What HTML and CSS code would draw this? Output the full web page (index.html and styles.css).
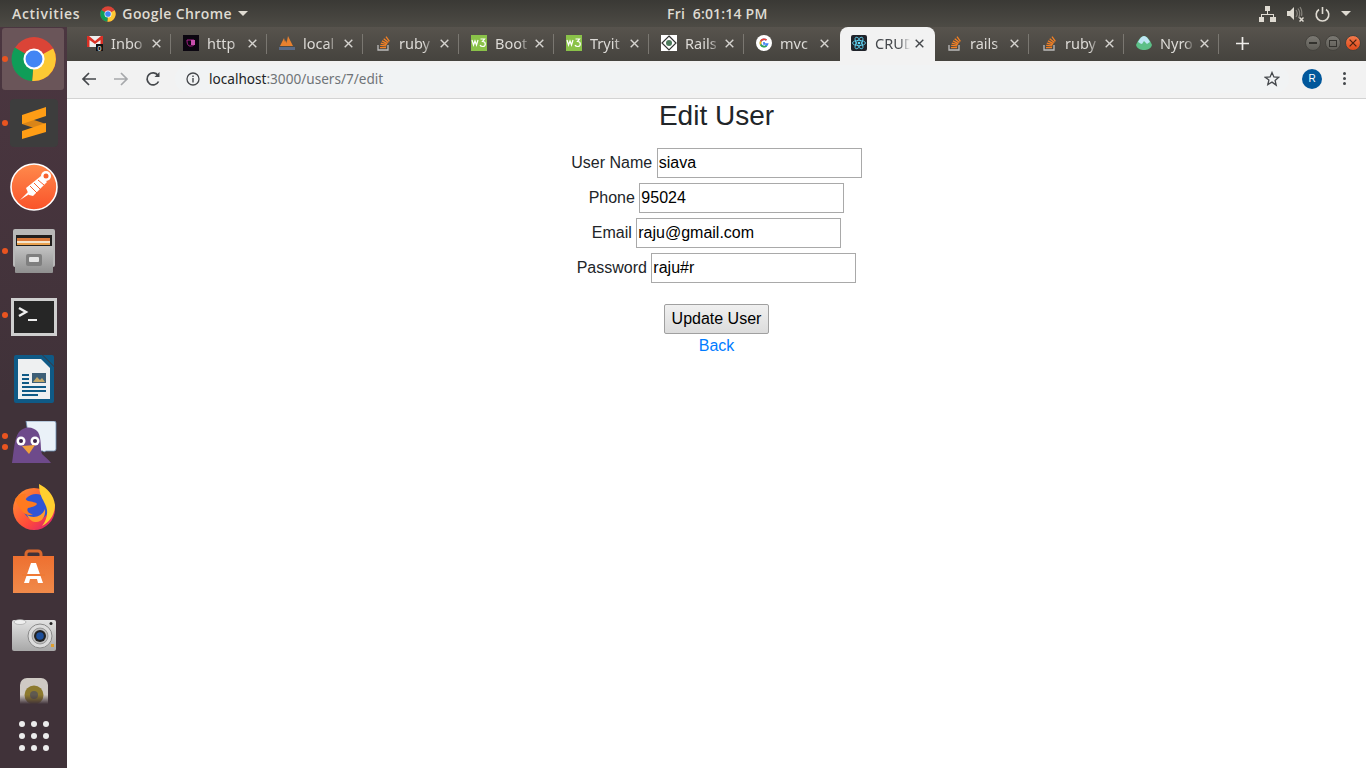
FILE: index.html
```html
<!DOCTYPE html>
<html lang="en">
<head>
    <meta charset="UTF-8">
    <title>Edit User</title>
    <link rel="stylesheet" href="styles.css">
</head>
<body>
    <svg class="defs" width="0" height="0">
        <symbol id="so" viewBox="0 0 16 16">
            <path d="M3 10v5h10v-5" fill="none" stroke="#bcbbbb" stroke-width="1.300"/>
            <path d="M5 12.600h6M5.200 10.400l6 .5M5.800 8.200l5.900 1.500M7 5.900l5.400 2.700M8.700 3.700l4.700 3.800M11 1.600l3.400 4.800" fill="none" stroke="#f48024" stroke-width="1.300"/>
        </symbol>
        <symbol id="w3" viewBox="0 0 16 16">
            <rect width="16" height="16" fill="#8ac249"/>
            <path d="M1 5l1.500 5 1.500-4 1.500 4 1.500-5M9.500 4h4l-2 2.500c2 0 2.800 1.200 2.800 2.500s-1 2.500-2.600 2.500-2.400-.8-2.700-1.500" fill="none" stroke="#fff" stroke-width="1.200"/>
        </symbol>
        <symbol id="close" viewBox="0 0 9 9">
            <path d="M.7.7l7.600 7.600M8.300.7L.7 8.300" fill="none" stroke="currentColor" stroke-width="1.400"/>
        </symbol>
    </svg>

    <header class="top-panel">
        <span class="panel-label activities">Activities</span>
        <span class="app-menu">
            <svg class="app-menu-icon" viewBox="0 0 48 48">
                <circle cx="24" cy="24" r="23" fill="#db4437"/>
                <path d="M24 24L44 13A23 23 0 0 1 22 47Z" fill="#fcc934"/>
                <path d="M24 24L22 47A23 23 0 0 1 4 12Z" fill="#0f9d58"/>
                <circle cx="24" cy="24" r="10.500" fill="#fff"/>
                <circle cx="24" cy="24" r="8.500" fill="#4285f4"/>
            </svg>
            <span class="panel-label app-name">Google Chrome</span>
            <i class="caret"></i>
        </span>
        <span class="panel-label clock">Fri&nbsp; 6:01:14 PM</span>
        <span class="status-icons">
            <svg width="17" height="16" viewBox="0 0 17 16" fill="#dfdbd2">
                <rect x="6" y="0" width="5" height="5"/>
                <rect x="0" y="11" width="5" height="5"/>
                <rect x="11" y="11" width="6" height="5"/>
                <path d="M8 5h1v3h6v3h-1V9H3v2H2V8h6z"/>
            </svg>
            <svg width="17" height="16" viewBox="0 0 17 16">
                <path d="M0 5h3l4-4v13l-4-4H0z" fill="#dfdbd2"/>
                <path d="M9 4c1.500 2 1.500 5 0 7M11 2.500c2 3 2 7 .5 9.500M13 1c2 3 2.200 6 1.500 9" fill="none" stroke="#86837c" stroke-width="1.200"/>
                <path d="M12.500 11.500l4 4M16.500 11.500l-4 4" stroke="#dfdbd2" stroke-width="1.500"/>
            </svg>
            <svg width="15" height="16" viewBox="0 0 15 16" fill="none" stroke="#dfdbd2" stroke-width="1.600">
                <path d="M4 3.500a6.300 6.300 0 1 0 7 0M7.500 1v7"/>
            </svg>
            <i class="caret"></i>
        </span>
    </header>

    <div class="desktop">
        <nav class="dock">
            <div class="dock-list">
                <div class="dock-item active">
                    <i class="dot"></i>
                    <svg width="46" height="46" viewBox="0 0 48 48">
                        <circle cx="24" cy="24" r="23" fill="#db4437"/>
                        <path d="M24 24L44 13A23 23 0 0 1 22 47Z" fill="#fcc934"/>
                        <path d="M24 24L22 47A23 23 0 0 1 4 12Z" fill="#0f9d58"/>
                        <circle cx="24" cy="24" r="11" fill="#fff"/>
                        <circle cx="24" cy="24" r="8.800" fill="#4285f4"/>
                    </svg>
                </div>
                <div class="dock-item">
                    <i class="dot"></i>
                    <svg width="48" height="48" viewBox="0 0 48 48">
                        <rect width="48" height="48" rx="4" fill="#3d3d3d"/>
                        <path d="M12 17l24 8v8L12 25z" fill="#d98518"/>
                        <path d="M12 16L36 8v9L12 25z" fill="#ff9d15"/>
                        <path d="M12 32l24-8v9l-24 7z" fill="#ff9d15"/>
                    </svg>
                </div>
                <div class="dock-item">
                    <svg width="48" height="48" viewBox="0 0 48 48">
                        <defs><linearGradient id="pm" x1="0" y1="0" x2="0" y2="1"><stop offset="0" stop-color="#ff8a4c"/><stop offset="1" stop-color="#f9532a"/></linearGradient></defs>
                        <circle cx="24" cy="24" r="23" fill="url(#pm)" stroke="#fff" stroke-width="1.600"/>
                        <path d="M10 37l9-9 2 2z" fill="#fff"/>
                        <path d="M16 25l15-12 6 6-14 14-4-1z" fill="#fff"/>
                        <path d="M20 23l8 8M24 20l7 7M28 17l6 5" stroke="#f9632f" stroke-width="1" fill="none"/>
                        <circle cx="36" cy="13" r="5" fill="#fff"/>
                        <circle cx="36" cy="13" r="2.500" fill="#f9632f"/>
                    </svg>
                </div>
                <div class="dock-item">
                    <i class="dot"></i>
                    <svg width="42" height="44" viewBox="0 0 42 44">
                        <defs><linearGradient id="cab" x1="0" y1="0" x2="0" y2="1"><stop offset="0" stop-color="#c4c4c4"/><stop offset="1" stop-color="#8f8f8f"/></linearGradient></defs>
                        <rect x="0" y="0" width="42" height="38" rx="2" fill="#b8b8b8"/>
                        <rect x="3" y="6" width="36" height="15" fill="#211f1e"/>
                        <rect x="4" y="9" width="33" height="5" fill="#d9783a"/>
                        <rect x="4" y="12" width="33" height="2" fill="#f4e4cc"/>
                        <rect x="4" y="14" width="33" height="2" fill="#e9a14f"/>
                        <rect x="2" y="17" width="38" height="27" rx="1" fill="url(#cab)"/>
                        <rect x="13" y="25" width="16" height="12" rx="2" fill="#7f7f7f"/>
                        <rect x="16" y="28" width="10" height="5" rx="1" fill="#e6e6e6"/>
                    </svg>
                </div>
                <div class="dock-item terminal">
                    <i class="dot"></i>
                    <svg width="46" height="38" viewBox="0 0 46 38">
                        <rect width="46" height="38" fill="#cfcfcf"/>
                        <rect x="3" y="3" width="40" height="32" fill="#262626"/>
                        <path d="M8 10l7 4-7 4" fill="none" stroke="#eee" stroke-width="2.400"/>
                        <rect x="17" y="21" width="9" height="2" fill="#eee"/>
                    </svg>
                </div>
                <div class="dock-item">
                    <svg width="40" height="48" viewBox="0 0 40 48">
                        <path d="M2 0h26l12 12v34a2 2 0 0 1-2 2H2a2 2 0 0 1-2-2V2a2 2 0 0 1 2-2z" fill="#0f5a86"/>
                        <path d="M4 4h23l9 9v31H4z" fill="#eef0f1"/>
                        <path d="M29 0h9a2 2 0 0 1 2 2v9z" fill="#0f5a86"/>
                        <rect x="18" y="18" width="14" height="10" fill="#3d5f77"/>
                        <path d="M19 27l4-5 3 3 2-2 3 4z" fill="#c4a96a"/>
                        <path d="M8 19h7v2H8zM8 23h7v2H8zM8 27h7v2H8zM8 31h24v2H8zM8 35h24v2H8zM8 39h16v2H8z" fill="#0f5a86"/>
                    </svg>
                </div>
                <div class="dock-item">
                    <i class="dot dot-upper"></i>
                    <i class="dot dot-lower"></i>
                    <svg width="46" height="44" viewBox="0 0 46 44">
                        <path d="M15 0h28a2 2 0 0 1 2 2v26a2 2 0 0 1-2 2h-8l-2 1-1-1H20z" fill="#eaf1f8" stroke="#6d8fb3" stroke-width=".8"/>
                        <path d="M1 42C3 30 3 18 8 11c5-6 14-6 19 0 4 7 2 17 4 22 3 3 7 6 9 9z" fill="#6e4a8b"/>
                        <circle cx="10" cy="20" r="4.500" fill="#fff"/>
                        <circle cx="24" cy="20" r="4.500" fill="#fff"/>
                        <circle cx="10" cy="20" r="2" fill="#3a2348"/>
                        <circle cx="24" cy="20" r="2" fill="#3a2348"/>
                        <path d="M11 25l13-1-6 9z" fill="#f0a03c"/>
                    </svg>
                </div>
                <div class="dock-item">
                    <svg width="44" height="46" viewBox="0 0 44 46">
                        <defs><linearGradient id="ff" x1="0" y1="0" x2="1" y2="1"><stop offset="0" stop-color="#ff9a2e"/><stop offset=".6" stop-color="#ff4a3a"/><stop offset="1" stop-color="#d6197c"/></linearGradient></defs>
                        <circle cx="22" cy="25" r="21" fill="url(#ff)"/>
                        <circle cx="24" cy="23" r="13" fill="#2f55d4"/>
                        <path d="M27 0c8 4 15 11 16 21 0 9-5 17-13 21 5-6 7-15 3-22-2-5-6-9-6-20z" fill="#ffcf2f"/>
                        <path d="M3 15c4-5 8-6 11-5-2 3-1 6 2 7 4 1 8 1 9 3-2 3-6 3-9 4-2 3 1 6 5 6-3 2-8 1-11-3-3-4-5-7-7-12z" fill="#ff7a1f"/>
                        <path d="M15 31c6 4 15 2 18-6 1 8-4 14-10 13-3 0-6-3-8-7z" fill="#ff9a2e"/>
                    </svg>
                </div>
                <div class="dock-item">
                    <svg width="43" height="44" viewBox="0 0 43 44">
                        <defs><linearGradient id="bag" x1="0" y1="0" x2="0" y2="1"><stop offset="0" stop-color="#ee7030"/><stop offset="1" stop-color="#f08a4a"/></linearGradient></defs>
                        <path d="M14 10V5a3 3 0 0 1 3-3h9a3 3 0 0 1 3 3v5" fill="none" stroke="#d9682e" stroke-width="3"/>
                        <path d="M1 7h41v37H1z" fill="url(#bag)"/>
                        <path d="M19 14h5l7 20h-5l-1-4h-7l-1 4h-5z" fill="#fff"/>
                        <path d="M10 25h23v2H10z" fill="#ef7a35"/>
                    </svg>
                </div>
                <div class="dock-item">
                    <svg width="44" height="32" viewBox="0 0 44 32">
                        <defs><linearGradient id="cam" x1="0" y1="0" x2="0" y2="1"><stop offset="0" stop-color="#e2e2e2"/><stop offset="1" stop-color="#a8a8a8"/></linearGradient></defs>
                        <rect y="1" width="44" height="31" rx="2" fill="url(#cam)"/>
                        <ellipse cx="8" cy="3" rx="6" ry="2.500" fill="#efefef" stroke="#8a8a8a" stroke-width=".5"/>
                        <circle cx="28" cy="17" r="12" fill="#dcdcdc" stroke="#8a8a8a"/>
                        <circle cx="28" cy="17" r="8" fill="#bdbdbd" stroke="#777" stroke-width=".6"/>
                        <circle cx="28" cy="17" r="6" fill="#232323"/>
                        <circle cx="28" cy="17" r="3.800" fill="#1d4f9a"/>
                        <circle cx="39" cy="4.500" r="1.500" fill="#222"/>
                        <rect x="39" y="25" width="3" height="3" fill="#e0a030"/>
                    </svg>
                </div>
                <div class="dock-item speaker">
                    <svg width="36" height="42" viewBox="0 0 36 42">
                        <rect x="4" y="0" width="28" height="42" rx="7" fill="#cfcac4"/>
                        <circle cx="18" cy="17" r="9.500" fill="#8d7a2e"/>
                        <circle cx="18" cy="17" r="4" fill="#5f5a50"/>
                    </svg>
                </div>
            </div>
            <div class="app-grid">
                <i></i><i></i><i></i><i></i><i></i><i></i><i></i><i></i><i></i>
            </div>
        </nav>

        <div class="browser">
            <div class="tab-strip">
                <div class="tab">
                    <svg class="favicon" viewBox="0 0 16 16">
                        <rect y="1" width="16" height="11" fill="#eee"/>
                        <path d="M0 1h2l6 5 6-5h2v11h-2.500V5L8 9 2.500 5v7H0z" fill="#d93025"/>
                        <rect x="9" y="9" width="8" height="8" fill="#111"/>
                        <text x="10.500" y="15.500" class="badge-text">0</text>
                    </svg>
                    <span class="tab-title">Inbo</span>
                    <svg class="tab-close"><use href="#close"/></svg>
                </div>
                <div class="tab">
                    <svg class="favicon" viewBox="0 0 16 16">
                        <rect width="16" height="16" fill="#0b0610"/>
                        <path d="M4 5h7v4c0 2-2 2-4 2s-3-2-3-6z" fill="none" stroke="#b0238f" stroke-width="1"/>
                        <rect x="8" y="5" width="4" height="5" fill="#c84fae"/>
                    </svg>
                    <span class="tab-title">http</span>
                    <svg class="tab-close"><use href="#close"/></svg>
                </div>
                <div class="tab">
                    <svg class="favicon" viewBox="0 0 16 16">
                        <path d="M1 11L5 3l2 8zM7 11l2-10 5 10zM4 11L7 5l1 6z" fill="#e8812f"/>
                        <rect x="0" y="12" width="16" height="3" fill="#5a6a86"/>
                    </svg>
                    <span class="tab-title">local</span>
                    <svg class="tab-close"><use href="#close"/></svg>
                </div>
                <div class="tab">
                    <svg class="favicon"><use href="#so"/></svg>
                    <span class="tab-title">ruby</span>
                    <svg class="tab-close"><use href="#close"/></svg>
                </div>
                <div class="tab">
                    <svg class="favicon"><use href="#w3"/></svg>
                    <span class="tab-title">Boot</span>
                    <svg class="tab-close"><use href="#close"/></svg>
                </div>
                <div class="tab">
                    <svg class="favicon"><use href="#w3"/></svg>
                    <span class="tab-title">Tryit</span>
                    <svg class="tab-close"><use href="#close"/></svg>
                </div>
                <div class="tab">
                    <svg class="favicon" viewBox="0 0 16 16">
                        <rect width="16" height="16" fill="#fff"/>
                        <path d="M8 1l7 7-7 7-7-7z" fill="none" stroke="#333" stroke-width="1.200"/>
                        <circle cx="8" cy="8" r="3" fill="#4c7a5c"/>
                    </svg>
                    <span class="tab-title">Rails</span>
                    <svg class="tab-close"><use href="#close"/></svg>
                </div>
                <div class="tab no-sep">
                    <svg class="favicon" viewBox="0 0 16 16">
                        <circle cx="8" cy="8" r="8" fill="#fff"/>
                        <path d="M8 7v2h3.500a3.600 3.600 0 1 1-1-3.800" fill="none" stroke="#4285f4" stroke-width="1.700"/>
                        <path d="M10.500 5.200A3.700 3.700 0 0 0 4.700 6.400" fill="none" stroke="#ea4335" stroke-width="1.700"/>
                        <path d="M4.700 6.400a3.700 3.700 0 0 0 0 3.200" fill="none" stroke="#fbbc05" stroke-width="1.700"/>
                        <path d="M4.700 9.600a3.700 3.700 0 0 0 5.800 1.200" fill="none" stroke="#34a853" stroke-width="1.700"/>
                    </svg>
                    <span class="tab-title">mvc</span>
                    <svg class="tab-close"><use href="#close"/></svg>
                </div>
                <div class="tab active">
                    <svg class="favicon" viewBox="0 0 16 16">
                        <rect width="16" height="16" rx="2" fill="#20232a"/>
                        <g fill="none" stroke="#61dafb" stroke-width=".8">
                            <ellipse cx="8" cy="8" rx="6.500" ry="2.600"/>
                            <ellipse cx="8" cy="8" rx="6.500" ry="2.600" transform="rotate(60 8 8)"/>
                            <ellipse cx="8" cy="8" rx="6.500" ry="2.600" transform="rotate(120 8 8)"/>
                        </g>
                        <circle cx="8" cy="8" r="1.300" fill="#61dafb"/>
                    </svg>
                    <span class="tab-title">CRUD</span>
                    <svg class="tab-close"><use href="#close"/></svg>
                </div>
                <div class="tab">
                    <svg class="favicon"><use href="#so"/></svg>
                    <span class="tab-title">rails</span>
                    <svg class="tab-close"><use href="#close"/></svg>
                </div>
                <div class="tab">
                    <svg class="favicon"><use href="#so"/></svg>
                    <span class="tab-title">ruby</span>
                    <svg class="tab-close"><use href="#close"/></svg>
                </div>
                <div class="tab">
                    <svg class="favicon" viewBox="0 0 16 16">
                        <path d="M0 10C2 5 5 1 8 1s6 4 8 9c-1 4-5 5-8 5s-7-1-8-5z" fill="#5cbf87"/>
                        <path d="M2 7C4 3 6 1 8 1s4 2 6 6c-2 1-3 2-3 2L8 6 6 9C5 9 4 8 2 7z" fill="#bfe6f5"/>
                    </svg>
                    <span class="tab-title">Nyro</span>
                    <svg class="tab-close"><use href="#close"/></svg>
                </div>
                <span class="new-tab">
                    <svg width="13" height="13" viewBox="0 0 13 13"><path d="M6.500 0v13M0 6.500h13" stroke="#efedea" stroke-width="1.700"/></svg>
                </span>
                <div class="window-buttons">
                    <span class="win-btn"><i class="win-min"></i></span>
                    <span class="win-btn"><i class="win-max"></i></span>
                    <span class="win-btn win-close"><svg width="8" height="8"><use href="#close"/></svg></span>
                </div>
            </div>

            <div class="toolbar">
                <svg class="tool-icon" viewBox="0 0 16 16" fill="none" stroke="#45484c" stroke-width="1.700">
                    <path d="M15 8H2M8 2L2 8l6 6"/>
                </svg>
                <svg class="tool-icon" viewBox="0 0 16 16" fill="none" stroke="#a6a8ab" stroke-width="1.700">
                    <path d="M1 8h13M8 2l6 6-6 6"/>
                </svg>
                <svg class="tool-icon" viewBox="0 0 16 16" fill="none" stroke="#45484c" stroke-width="1.700">
                    <path d="M13.500 10.500A6 6 0 1 1 13 4.500"/>
                    <path d="M14.500 1v5h-5z" fill="#45484c" stroke="none"/>
                </svg>
                <div class="omnibox">
                    <svg class="info-icon" viewBox="0 0 14 14">
                        <circle cx="7" cy="7" r="6" fill="none" stroke="#45484c" stroke-width="1.300"/>
                        <path d="M6.300 6h1.400v4.500H6.300zM6.300 3.500h1.400v1.400H6.300z" fill="#45484c"/>
                    </svg>
                    <span class="url"><b>localhost</b>:3000/users/7/edit</span>
                    <svg class="star-icon" viewBox="0 0 16 16">
                        <path d="M8 1.500l1.900 4.400 4.800.4-3.600 3.100 1.100 4.700L8 11.100l-4.200 2.500 1.100-4.700L1.300 6.300l4.800-.4z" fill="none" stroke="#45484c" stroke-width="1.300"/>
                    </svg>
                </div>
                <span class="avatar">R</span>
                <span class="menu-dots"><i></i><i></i><i></i></span>
            </div>

            <main class="page">
                <h2 class="page-title">Edit User</h2>
                <form class="user-form">
                    <div class="field"><label>User Name</label> <input type="text" value="siava"></div>
                    <div class="field"><label>Phone</label> <input type="text" value="95024"></div>
                    <div class="field"><label>Email</label> <input type="text" value="raju@gmail.com"></div>
                    <div class="field"><label>Password</label> <input type="text" value="raju#r"></div>
                    <button type="button" class="submit">Update User</button>
                </form>
                <a class="back-link" href="#">Back</a>
            </main>
        </div>
    </div>
</body>
</html>
```

FILE: styles.css
```css
* {
    box-sizing: border-box;
}
html, body {
    height: 100%;
}
body {
    margin: 0;
    display: flex;
    flex-direction: column;
    overflow: hidden;
    font-family: "Liberation Sans", Arial, sans-serif;
    background-color: #fff;
}
i {
    display: block;
}
.defs {
    position: absolute;
}

/* ubuntu top panel */
.top-panel {
    height: 27px;
    flex: none;
    display: flex;
    align-items: center;
    padding: 0 15px 0 12px;
    position: relative;
    background: linear-gradient(#3a3935, #4d4b45);
}
.panel-label {
    font-family: "Open Sans", "Noto Sans", sans-serif;
    font-size: 14px;
    font-weight: 600;
    color: #dfdbd2;
    white-space: nowrap;
}
.activities {
    letter-spacing: .7px;
}
.app-name {
    letter-spacing: .4px;
}
.app-menu {
    display: flex;
    align-items: center;
    margin-left: 20px;
}
.app-menu-icon {
    width: 16px;
    height: 16px;
    margin-right: 6px;
}
.caret {
    width: 0;
    height: 0;
    margin-left: 6px;
    border-left: 5px solid transparent;
    border-right: 5px solid transparent;
    border-top: 5px solid #dfdbd2;
}
.clock {
    position: absolute;
    left: 667px;
    letter-spacing: .2px;
}
.status-icons {
    margin-left: auto;
    display: flex;
    align-items: center;
    gap: 11px;
}
.status-icons .caret {
    margin-left: 0;
}

.desktop {
    flex: 1;
    min-height: 0;
    display: flex;
}

/* launcher */
.dock {
    width: 67px;
    flex: none;
    display: flex;
    flex-direction: column;
    background: linear-gradient(#4b3640, #403239 50%);
}
.dock-list {
    flex: 1;
    min-height: 0;
    overflow: hidden;
}
.dock-item {
    height: 64px;
    position: relative;
    display: flex;
    align-items: center;
    justify-content: center;
}
.dock-item.active::before {
    content: "";
    position: absolute;
    left: 2px;
    top: 1px;
    width: 62px;
    height: 62px;
    border-radius: 3px;
    background-color: #6a5559;
}
.dock-item svg {
    position: relative;
}
.terminal svg {
    top: 2px;
}
.dot {
    position: absolute;
    left: 2px;
    top: 29px;
    width: 6px;
    height: 6px;
    border-radius: 50%;
    background-color: #e95420;
}
.dot-upper {
    top: 22px;
}
.dot-lower {
    top: 33px;
}
.speaker svg {
    -webkit-mask-image: linear-gradient(#000 40%, transparent 62%);
    mask-image: linear-gradient(#000 40%, transparent 62%);
}
.app-grid {
    height: 64px;
    flex: none;
    display: grid;
    grid-template-columns: repeat(3, 6px);
    grid-auto-rows: 6px;
    gap: 6px;
    justify-content: center;
    align-content: center;
}
.app-grid i {
    border-radius: 50%;
    background-color: #ececec;
}

/* chrome */
.browser {
    flex: 1;
    min-width: 0;
    display: flex;
    flex-direction: column;
}
.tab-strip {
    height: 34px;
    flex: none;
    display: flex;
    align-items: stretch;
    padding-left: 9px;
    position: relative;
    background: linear-gradient(#57534d, #45433e);
}
.tab {
    width: 95px;
    flex: none;
    display: flex;
    align-items: center;
    padding: 0 11px 2px;
    position: relative;
}
.tab:nth-child(-n+4) {
    width: 96px;
}
.tab::after {
    content: "";
    position: absolute;
    right: 1px;
    top: 7px;
    bottom: 7px;
    width: 1px;
    background-color: #7a7771;
}
.tab.no-sep::after, .tab.active::after {
    display: none;
}
.tab.active {
    background-color: #f2f2f2;
    border-radius: 8px 8px 0 0;
}
.favicon {
    width: 16px;
    height: 16px;
    flex: none;
}
.badge-text {
    font-size: 7px;
    font-family: "Liberation Sans", sans-serif;
    fill: #fff;
}
.tab-title {
    width: 35px;
    margin-left: 8px;
    overflow: hidden;
    white-space: nowrap;
    font-family: "Noto Sans", "Open Sans", sans-serif;
    font-size: 14.5px;
    color: #dcdad6;
    -webkit-mask-image: linear-gradient(90deg, #000 70%, transparent);
    mask-image: linear-gradient(90deg, #000 70%, transparent);
}
.tab.active .tab-title {
    color: #45484c;
}
.tab-close {
    width: 9px;
    height: 9px;
    flex: none;
    margin-left: auto;
    color: #d5d3cf;
}
.tab.active .tab-close {
    color: #45484c;
}
.new-tab {
    display: flex;
    align-items: center;
    margin-left: 16px;
    padding-bottom: 2px;
}
.window-buttons {
    margin-left: auto;
    display: flex;
    align-items: center;
    gap: 4px;
    padding: 0 5px 2px 0;
}
.win-btn {
    width: 16px;
    height: 16px;
    display: flex;
    align-items: center;
    justify-content: center;
    border-radius: 50%;
    background: linear-gradient(#7b7973, #5f5d57);
    border: 1px solid #45433e;
}
.win-min {
    width: 8px;
    height: 2px;
    background-color: #33322e;
}
.win-max {
    width: 8px;
    height: 7px;
    border: 1px solid #33322e;
}
.win-close {
    background: linear-gradient(#f37a4c, #e0491a);
    color: #4a2010;
}

.toolbar {
    height: 38px;
    flex: none;
    display: flex;
    align-items: center;
    padding: 0 0 2px 14px;
    background-color: #f2f2f2;
    border-bottom: 1px solid #d3d3d3;
}
.tool-icon {
    width: 16px;
    height: 16px;
    flex: none;
    margin-right: 16px;
}
.omnibox {
    flex: 1;
    height: 28px;
    display: flex;
    align-items: center;
    margin-left: -2px;
    padding: 0 9px 0 11px;
    border-radius: 14px;
    background-color: #f1f3f4;
}
.info-icon {
    width: 14px;
    height: 14px;
    margin-right: 9px;
}
.url {
    font-family: "Noto Sans", "Open Sans", sans-serif;
    font-size: 13.6px;
    color: #6f7377;
}
.url b {
    font-weight: 400;
    color: #212326;
}
.star-icon {
    width: 16px;
    height: 16px;
    margin-left: auto;
}
.avatar {
    width: 20px;
    height: 20px;
    flex: none;
    margin-left: 13px;
    border-radius: 50%;
    background-color: #01579b;
    color: #fff;
    font-size: 10px;
    line-height: 20px;
    text-align: center;
}
.menu-dots {
    display: flex;
    flex-direction: column;
    gap: 2px;
    margin: 0 20px 0 21px;
}
.menu-dots i {
    width: 3px;
    height: 3px;
    border-radius: 50%;
    background-color: #45484c;
}

/* page */
.page {
    flex: 1;
    text-align: center;
    color: #212529;
    font-size: 16px;
    line-height: 24px;
}
.page-title {
    margin: 0 0 15px;
    font-size: 28px;
    font-weight: 400;
    line-height: 34px;
}
.field {
    height: 35px;
}
.field label {
    vertical-align: middle;
}
.field input {
    width: 205px;
    height: 30px;
    padding: 1px;
    font: 16px "Liberation Sans", Arial, sans-serif;
    color: #000;
    border: 1px solid #a9a9a9;
    vertical-align: middle;
}
.submit {
    display: block;
    margin: 16px auto 0;
    height: 30px;
    width: 105px;
    padding: 0;
    font: 16px "Liberation Sans", Arial, sans-serif;
    color: #000;
    background: linear-gradient(#f0f0f0, #dcdcdc);
    border: 1px solid #a0a0a0;
    border-radius: 2px;
}
.back-link {
    color: #007bff;
    text-decoration: none;
}
```
